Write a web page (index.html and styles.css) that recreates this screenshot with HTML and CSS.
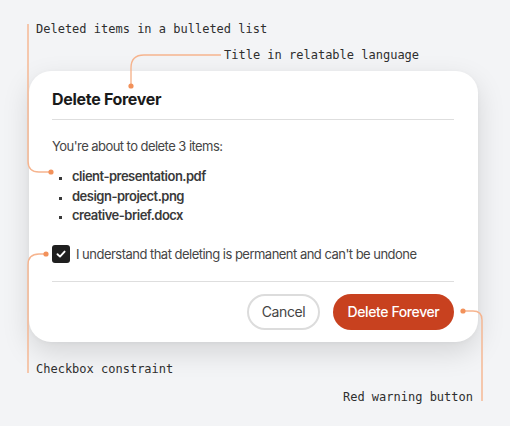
FILE: index.html
```html
<!DOCTYPE html>
<html lang="en">
<head>
    <meta charset="UTF-8">
    <meta name="viewport" content="width=device-width, initial-scale=1.0">
    <title>Delete Forever</title>
    <link rel="stylesheet" href="styles.css">
</head>
<body>
    <div class="stage">
        <div class="dialog">
            <h2 class="dialog-title">Delete Forever</h2>
            <p class="intro">You're about to delete 3 items:</p>
            <ul class="file-list">
                <li>client-presentation.pdf</li>
                <li>design-project.png</li>
                <li>creative-brief.docx</li>
            </ul>
            <label class="confirm">
                <span class="checkbox">
                    <svg width="12" height="12" viewBox="0 0 12 12"><path d="M2.5 6.2 L5 8.6 L9.6 3.6" fill="none" stroke="#fff" stroke-width="1.9" stroke-linecap="round" stroke-linejoin="round"/></svg>
                </span>
                I understand that deleting is permanent and can't be undone
            </label>
            <div class="actions">
                <button class="btn cancel">Cancel</button>
                <button class="btn danger">Delete Forever</button>
            </div>
        </div>

        <!-- callout lines -->
        <svg class="callouts" width="510" height="426" viewBox="0 0 510 426">
            <g fill="none" stroke="#f6b48e" stroke-width="1.4">
                <path d="M28 24 V161 Q28 172 39 172 H51"/>
                <path d="M221 55 H144 Q131 55 131 68 V86"/>
                <path d="M46 254 H39 Q28 254 28 265 V373"/>
                <path d="M463 311 H473 Q482 311 482 320 V401"/>
            </g>
            <g fill="#f2915a">
                <circle cx="51" cy="172" r="2.6"/>
                <circle cx="131" cy="86" r="2.6"/>
                <circle cx="46" cy="254" r="2.6"/>
                <circle cx="463" cy="311" r="2.6"/>
            </g>
        </svg>
        <span class="note note-list">Deleted items in a bulleted list</span>
        <span class="note note-title">Title in relatable language</span>
        <span class="note note-check">Checkbox constraint</span>
        <span class="note note-button">Red warning button</span>
    </div>
</body>
</html>
```

FILE: styles.css
```css
body {
    margin: 0;
    background-color: #f3f4f6;
    font-family: Inter, 'Liberation Sans', sans-serif;
}

.stage {
    position: relative;
    width: 510px;
    height: 426px;
    padding: 71px 0 0 29px;
    box-sizing: border-box;
}

.dialog {
    position: relative;
    z-index: 1;
    width: 449px;
    box-sizing: border-box;
    padding: 18px 24px 12px 23px;
    background-color: #fff;
    border-radius: 22px;
    box-shadow: 0 10px 28px rgba(0, 0, 0, 0.13), 0 1px 4px rgba(0, 0, 0, 0.04);
}

.dialog-title {
    margin: 0;
    padding-bottom: 10px;
    border-bottom: 1px solid #dedede;
    font-size: 16px;
    line-height: 20px;
    font-weight: 700;
    letter-spacing: -0.3px;
    color: #1a1a1a;
}

.intro {
    margin: 17px 0 0;
    font-size: 13px;
    line-height: 18px;
    letter-spacing: -0.55px;
    color: #454545;
}

.file-list {
    margin: 12px 0 0;
    padding: 0 0 0 20px;
    list-style: square;
    font-size: 13px;
    line-height: 19.5px;
    font-weight: 600;
    letter-spacing: -0.5px;
    color: #3a3a3a;
}

.file-list li::marker {
    font-size: 10px;
}

.confirm {
    display: flex;
    align-items: center;
    gap: 6px;
    margin-top: 19px;
    padding-bottom: 18px;
    border-bottom: 1px solid #dedede;
    font-size: 13px;
    line-height: 18px;
    letter-spacing: -0.52px;
    color: #454545;
}

.checkbox {
    display: flex;
    align-items: center;
    justify-content: center;
    width: 18px;
    height: 18px;
    border-radius: 3px;
    background-color: #1f1f1f;
}

.actions {
    display: flex;
    justify-content: flex-end;
    gap: 13px;
    margin-top: 12px;
}

.btn {
    height: 36px;
    border-radius: 18px;
    font-family: inherit;
    font-size: 14px;
    letter-spacing: -0.4px;
    cursor: pointer;
}

.btn.cancel {
    width: 73px;
    border: 2px solid #dcdcdc;
    background-color: #fff;
    color: #444;
}

.btn.danger {
    width: 121px;
    border: none;
    background-color: #c8411f;
    color: #fff;
    font-weight: 500;
}

.callouts {
    position: absolute;
    top: 0;
    left: 0;
    z-index: 2;
}

.note {
    position: absolute;
    z-index: 2;
    font-family: 'DejaVu Sans Mono', 'Liberation Mono', monospace;
    font-size: 12px;
    line-height: 14px;
    color: #2e2e2e;
    white-space: nowrap;
}

.note-list {
    left: 36px;
    top: 22px;
}

.note-title {
    left: 224px;
    top: 48px;
}

.note-check {
    left: 36px;
    top: 362px;
}

.note-button {
    right: 37px;
    top: 390px;
}
```
